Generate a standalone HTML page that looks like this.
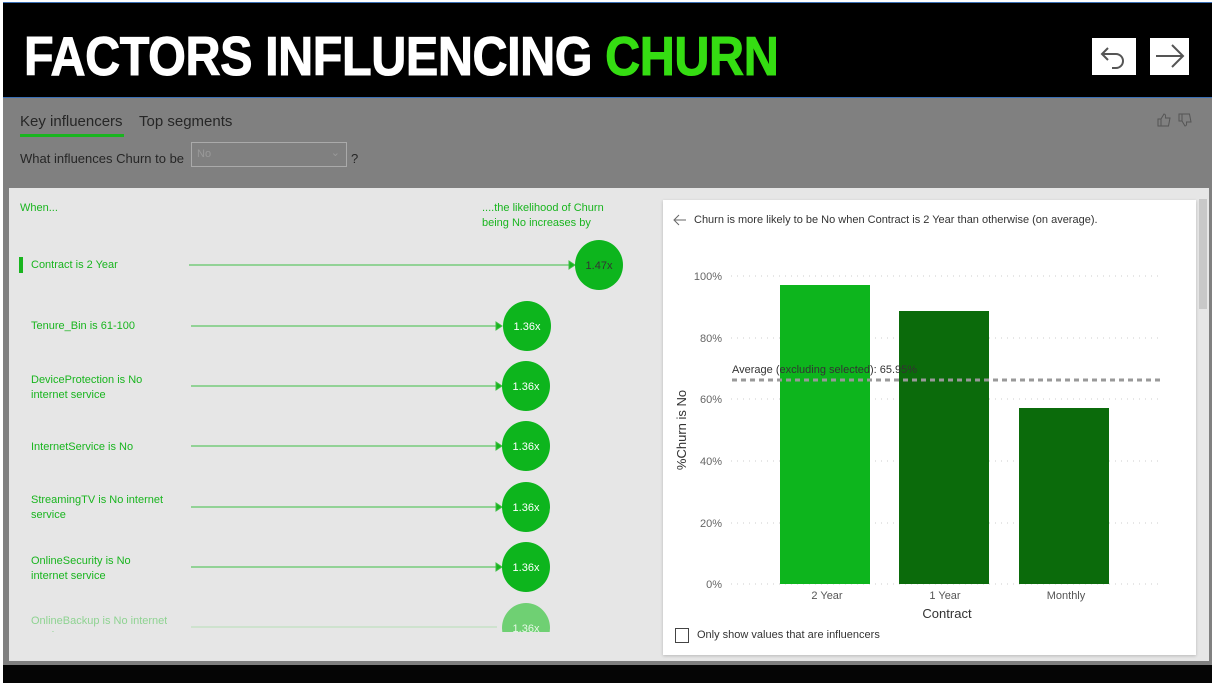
<!DOCTYPE html>
<html><head><meta charset="utf-8"><style>
*{margin:0;padding:0;box-sizing:border-box}
body{width:1215px;height:683px;overflow:hidden;background:#fff;font-family:"Liberation Sans",sans-serif;position:relative}
.a{position:absolute}
.g{color:#19b51f;font-size:11px}
</style></head><body>
<div class="a" style="left:3px;top:2px;width:1209px;height:96px;background:#000;border-top:1px solid #3a6fb5;border-bottom:1px solid #3a6fb5"></div>
<div class="a" style="left:24px;top:26px;font-weight:bold;font-size:55px;color:#fff;line-height:60px;letter-spacing:-0.5px;white-space:nowrap;transform:scaleX(0.883);transform-origin:0 0;-webkit-text-stroke:1px #fff">FACTORS INFLUENCING <span style="color:#35dd12;-webkit-text-stroke:1px #35dd12">CHURN</span></div>
<div class="a" style="left:1092px;top:38px;width:44px;height:37px;background:#fff"></div>
<svg class="a" style="left:1092px;top:38px" width="44" height="37"><path d="M16 10 L10 16 L16 22 M10 16 H24 a7 7 0 0 1 0 14 H20" fill="none" stroke="#555" stroke-width="2"/></svg>
<div class="a" style="left:1150px;top:38px;width:39px;height:37px;background:#fff"></div>
<svg class="a" style="left:1150px;top:38px" width="39" height="37"><path d="M6 18 H33 M22 7 L33 18 L22 29" fill="none" stroke="#555" stroke-width="2"/></svg>
<div class="a" style="left:3px;top:98px;width:1209px;height:567px;background:#808080"></div>
<div class="a" style="left:20px;top:113px;font-size:15px;color:#262626">Key influencers</div>
<div class="a" style="left:20px;top:134px;width:104px;height:3px;background:#19b51f"></div>
<div class="a" style="left:139px;top:113px;font-size:15px;color:#262626">Top segments</div>
<svg class="a" style="left:1156px;top:112px" width="42" height="16"><g fill="none" stroke="#555"><path d="M2 7 H5 V14 H2Z M5 7 L8 2 Q10 2 9.5 6 H14 L12.5 14 H5"/><path d="M23 9 H26 V2 H23Z M26 9 L29 14 Q31 14 30.5 10 H35 L33.5 2 H26"/></g></svg>
<div class="a" style="left:20px;top:151px;font-size:13px;color:#262626">What influences Churn to be</div>
<div class="a" style="left:191px;top:142px;width:156px;height:25px;border:1px solid #aaa;font-size:11px;color:#999;padding:5px 5px">No<span style="position:absolute;right:6px;top:3px">⌄</span></div>
<div class="a" style="left:351px;top:151px;font-size:13px;color:#262626">?</div>
<div class="a" style="left:9px;top:188px;width:1200px;height:473px;background:#e6e6e6"></div>
<div class="a g" style="left:20px;top:202px">When...</div>
<div class="a g" style="left:482px;top:201px;line-height:15px">....the likelihood of Churn<br>being No increases by</div>
<div class="a" style="left:19px;top:257px;width:4px;height:16px;background:#19b51f"></div>
<svg class="a" style="left:0;top:230px" width="660" height="420">
<g stroke="#3fbf45" stroke-width="1" fill="#19b51f">
<line x1="189" y1="35" x2="570" y2="35"/><path d="M569 31 L575 35 L569 39Z"/>
<line x1="191" y1="96" x2="497" y2="96"/><path d="M496 92 L502 96 L496 100Z"/>
<line x1="191" y1="156" x2="497" y2="156"/><path d="M496 152 L502 156 L496 160Z"/>
<line x1="191" y1="216" x2="497" y2="216"/><path d="M496 212 L502 216 L496 220Z"/>
<line x1="191" y1="277" x2="497" y2="277"/><path d="M496 273 L502 277 L496 281Z"/>
<line x1="191" y1="337" x2="497" y2="337"/><path d="M496 333 L502 337 L496 341Z"/>
</g>
<g stroke="#b5dfb7"><line x1="191" y1="397" x2="497" y2="397"/></g>
<g fill="#0db51d" stroke="none">
<ellipse cx="599" cy="35" rx="24" ry="25"/>
<ellipse cx="527" cy="96" rx="24" ry="25"/>
<ellipse cx="526" cy="156" rx="24" ry="25"/>
<ellipse cx="526" cy="216" rx="24" ry="25"/>
<ellipse cx="526" cy="277" rx="24" ry="25"/>
<ellipse cx="526" cy="337" rx="24" ry="25"/>
<ellipse cx="526" cy="398" rx="24" ry="25" fill="#6fd073"/>
</g>
<rect x="9" y="402" width="651" height="18" fill="#e6e6e6"/>
<g font-family="Liberation Sans" font-size="11" text-anchor="middle">
<text x="599" y="39" fill="#333">1.47x</text>
<text x="527" y="100" fill="#fff">1.36x</text>
<text x="526" y="160" fill="#fff">1.36x</text>
<text x="526" y="220" fill="#fff">1.36x</text>
<text x="526" y="281" fill="#fff">1.36x</text>
<text x="526" y="341" fill="#fff">1.36x</text>
<text x="526" y="402" fill="#e8f7e8">1.36x</text>
</g>
</svg>
<div class="a g" style="left:31px;top:259px">Contract is 2 Year</div>
<div class="a g" style="left:31px;top:320px">Tenure_Bin is 61-100</div>
<div class="a g" style="left:31px;top:373px;line-height:15px">DeviceProtection is No<br>internet service</div>
<div class="a g" style="left:31px;top:441px">InternetService is No</div>
<div class="a g" style="left:31px;top:493px;line-height:15px">StreamingTV is No internet<br>service</div>
<div class="a g" style="left:31px;top:554px;line-height:15px">OnlineSecurity is No<br>internet service</div>
<div class="a g" style="left:31px;top:614px;color:#8fd392;height:19px;overflow:hidden;line-height:15px">OnlineBackup is No internet<br>service</div>
<div class="a" style="left:1199px;top:199px;width:8px;height:110px;background:#c8c8c8"></div>
<div class="a" style="left:663px;top:200px;width:533px;height:455px;background:#fff;box-shadow:0 1px 3px rgba(0,0,0,.2)"></div>
<svg class="a" style="left:663px;top:200px" width="533" height="455" font-family="Liberation Sans">
<path d="M12 20 H23 M16 15 L11 20 L16 25" stroke="#666" fill="none"/>
<text x="31" y="23" font-size="11" fill="#333">Churn is more likely to be No when Contract is 2 Year than otherwise (on average).</text>
<g stroke="#ccc" stroke-dasharray="1 5">
<line x1="68" y1="76" x2="500" y2="76"/><line x1="68" y1="138" x2="500" y2="138"/><line x1="68" y1="199" x2="500" y2="199"/><line x1="68" y1="261" x2="500" y2="261"/><line x1="68" y1="323" x2="500" y2="323"/><line x1="68" y1="384" x2="500" y2="384"/>
</g>
<g font-size="11" fill="#666" text-anchor="end">
<text x="59" y="80">100%</text><text x="59" y="142">80%</text><text x="59" y="203">60%</text><text x="59" y="265">40%</text><text x="59" y="327">20%</text><text x="59" y="388">0%</text>
</g>
<rect x="117" y="85" width="90" height="299" fill="#0db51d"/>
<rect x="236" y="111" width="90" height="273" fill="#0b6b0b"/>
<rect x="356" y="208" width="90" height="176" fill="#0b6b0b"/>
<text x="69" y="173" font-size="11" fill="#333">Average (excluding selected): 65.95%</text>
<line x1="69" y1="180" x2="499" y2="180" stroke="#999" stroke-width="3" stroke-dasharray="5 4"/>
<g font-size="11" fill="#555" text-anchor="middle"><text x="164" y="399">2 Year</text><text x="282" y="399">1 Year</text><text x="403" y="399">Monthly</text></g>
<text x="284" y="418" font-size="13" fill="#333" text-anchor="middle">Contract</text>
<text transform="translate(23,230) rotate(-90)" font-size="13" fill="#333" text-anchor="middle">%Churn is No</text>
<rect x="12.5" y="428.5" width="13" height="14" fill="#fff" stroke="#444"/>
<text x="34" y="438" font-size="11" fill="#333">Only show values that are influencers</text>
</svg>
<div class="a" style="left:3px;top:665px;width:1209px;height:18px;background:#050505"></div>
</body></html>
